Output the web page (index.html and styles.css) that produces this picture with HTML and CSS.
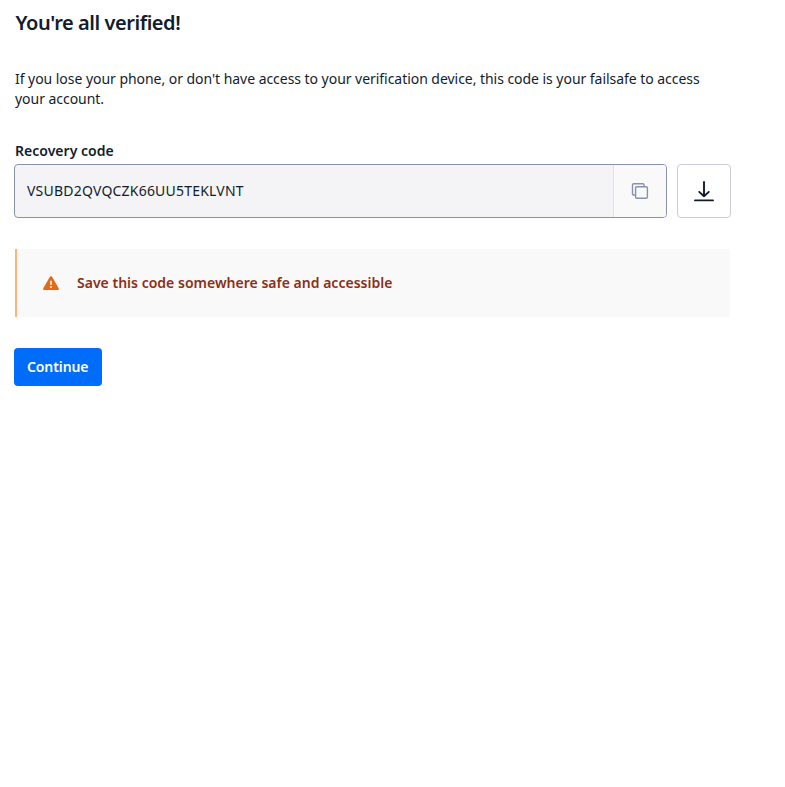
FILE: index.html
```
<!DOCTYPE html>
<html lang="en">
<head>
<meta charset="utf-8">
<title>Recovery code</title>
<link rel="stylesheet" href="styles.css">
</head>
<body>
<main class="page">
  <h1 class="title"><span>You're all verified!</span></h1>
  <p class="intro"><span>If you lose your phone, or don't have access to your verification device, this code is your failsafe to access</span><br><span>your account.</span></p>
  <label class="label" for="code"><span>Recovery code</span></label>
  <div class="code-row">
    <div class="field">
      <output class="code" id="code"><span>VSUBD2QVQCZK66UU5TEKLVNT</span></output>
      <button class="copy" type="button" aria-label="Copy">
        <svg width="18" height="18" viewBox="0 0 18 18" fill="none" stroke="#8891aa" stroke-width="1.4"><path d="M4.2 13H2.7A1.2 1.2 0 0 1 1.5 11.8V2.9A1.2 1.2 0 0 1 2.7 1.7h9.1A1.2 1.2 0 0 1 13 2.9v1.5"/><rect x="4.6" y="4.7" width="11.8" height="11.6" rx="1.2"/></svg>
      </button>
    </div>
    <button class="download" type="button" aria-label="Download">
      <svg width="20" height="21" viewBox="0 0 20 21" fill="none" stroke="#121c2d" stroke-width="1.9" stroke-linecap="round" stroke-linejoin="round"><path d="M10 1v14.2M5.2 10.9l4.8 4.4 4.8-4.4M1 19.4h18"/></svg>
    </button>
  </div>
  <div class="alert">
    <svg width="16" height="14" viewBox="0 0 16 14"><path fill="#e36b18" d="M6.9.8a1.25 1.25 0 0 1 2.2 0l6.6 11.4A1.2 1.2 0 0 1 14.7 14H1.3a1.2 1.2 0 0 1-1-1.8z"/><path stroke="#fff" stroke-width="1.6" d="M8 4.8v3.9M8 10.2v1.8"/></svg>
    <span>Save this code somewhere safe and accessible</span>
  </div>
  <button class="continue" type="button"><span>Continue</span></button>
</main>
</body>
</html>
```
FILE: styles.css
```
* { box-sizing: border-box; }
body {
  margin: 0;
  background: #fff;
  color: #121c2d;
  font: 14px/20px "Noto Sans", sans-serif;
}
button { font: inherit; cursor: pointer; }
.page {
  display: flex;
  flex-direction: column;
  align-items: flex-start;
  width: 731px;
  padding: 9px 0 0 14px;
}
.title {
  margin: 0 0 0 1.5px;
  font-size: 20px;
  line-height: 28px;
  font-weight: 600;
  letter-spacing: -0.45px;
}
.intro { margin: 32px 0 0 1px; white-space: nowrap; letter-spacing: -0.043px; }
.label { margin: 32px 0 3px 1px; font-weight: 600; letter-spacing: 0.02px; }
.code-row { display: flex; gap: 10px; width: 100%; }
.field {
  display: flex;
  flex: 1;
  height: 54px;
  border: 1px solid #8891aa;
  border-radius: 4px;
  background: #f4f4f6;
  overflow: hidden;
}
.code {
  flex: 1;
  padding-left: 12px;
  line-height: 52px;
  letter-spacing: 0.21px;
}
.copy {
  display: flex;
  align-items: center;
  justify-content: center;
  width: 53px;
  padding: 0;
  border: 0;
  border-left: 1px solid #e1e3ea;
  background: #f9f9fa;
}
.download {
  display: flex;
  align-items: center;
  justify-content: center;
  width: 54px;
  height: 54px;
  padding: 0;
  border: 1px solid #cacdd8;
  border-radius: 4px;
  background: #fff;
}
.alert {
  display: flex;
  align-items: center;
  gap: 18px;
  width: 715px;
  height: 68px;
  margin: 31px 0 31px 1px;
  padding-left: 26px;
  border-left: 2px solid #ffb27a;
  background: #f9f9f9;
  color: #8c2f17;
  font-weight: 600;
  letter-spacing: 0.015px;
}
.continue {
  width: 88px;
  height: 38px;
  padding: 0 0 0 13px;
  border: 0;
  border-radius: 4px;
  background: #006dfa;
  color: #fff;
  font-weight: 600;
  text-align: left;
  letter-spacing: -0.1px;
}
```
